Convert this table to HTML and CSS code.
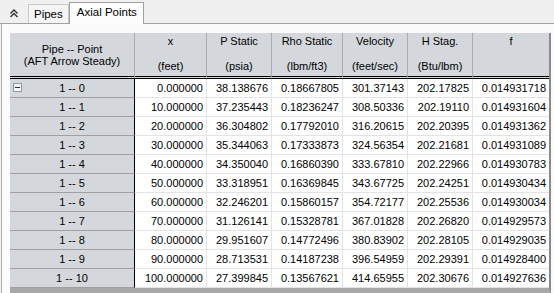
FILE: index.html
```html
<!DOCTYPE html>
<html lang="en">
<head>
    <meta charset="UTF-8">
    <title>Axial Points</title>
    <link rel="stylesheet" href="styles.css">
</head>
<body>
    <div class="tabstrip">
        <span class="collapse">
            <svg width="10" height="9" viewBox="0 0 10 9"><path d="M1.5 4.5 L5 1 L8.5 4.5 M1.5 8 L5 4.5 L8.5 8" fill="none" stroke="#333" stroke-width="1.4"/></svg>
        </span>
        <div class="tab">Pipes</div>
        <div class="tab active">Axial Points</div>
    </div>
    <div class="panel">
        <div class="grid">
            <table>
                <thead>
                    <tr>
                        <th class="c-pipe">Pipe -- Point<br>(AFT Arrow Steady)</th>
                        <th class="c-x"><div>x</div><div class="unit">(feet)</div></th>
                        <th class="c-p"><div>P Static</div><div class="unit">(psia)</div></th>
                        <th class="c-rho"><div>Rho Static</div><div class="unit">(lbm/ft3)</div></th>
                        <th class="c-v"><div>Velocity</div><div class="unit">(feet/sec)</div></th>
                        <th class="c-h"><div>H Stag.</div><div class="unit">(Btu/lbm)</div></th>
                        <th class="c-f"><div>f</div><div class="unit">&nbsp;</div></th>
                    </tr>
                </thead>
                <tbody>
                    <tr><td class="pt"><span class="minus"></span>1 -- 0</td><td>0.000000</td><td>38.138676</td><td>0.18667805</td><td>301.37143</td><td>202.17825</td><td>0.014931718</td></tr>
                    <tr><td class="pt">1 -- 1</td><td>10.000000</td><td>37.235443</td><td>0.18236247</td><td>308.50336</td><td>202.19110</td><td>0.014931604</td></tr>
                    <tr><td class="pt">1 -- 2</td><td>20.000000</td><td>36.304802</td><td>0.17792010</td><td>316.20615</td><td>202.20395</td><td>0.014931362</td></tr>
                    <tr><td class="pt">1 -- 3</td><td>30.000000</td><td>35.344063</td><td>0.17333873</td><td>324.56354</td><td>202.21681</td><td>0.014931089</td></tr>
                    <tr><td class="pt">1 -- 4</td><td>40.000000</td><td>34.350040</td><td>0.16860390</td><td>333.67810</td><td>202.22966</td><td>0.014930783</td></tr>
                    <tr><td class="pt">1 -- 5</td><td>50.000000</td><td>33.318951</td><td>0.16369845</td><td>343.67725</td><td>202.24251</td><td>0.014930434</td></tr>
                    <tr><td class="pt">1 -- 6</td><td>60.000000</td><td>32.246201</td><td>0.15860157</td><td>354.72177</td><td>202.25536</td><td>0.014930034</td></tr>
                    <tr><td class="pt">1 -- 7</td><td>70.000000</td><td>31.126141</td><td>0.15328781</td><td>367.01828</td><td>202.26820</td><td>0.014929573</td></tr>
                    <tr><td class="pt">1 -- 8</td><td>80.000000</td><td>29.951607</td><td>0.14772496</td><td>380.83902</td><td>202.28105</td><td>0.014929035</td></tr>
                    <tr><td class="pt">1 -- 9</td><td>90.000000</td><td>28.713531</td><td>0.14187238</td><td>396.54959</td><td>202.29391</td><td>0.014928400</td></tr>
                    <tr><td class="pt">1 -- 10</td><td>100.000000</td><td>27.399845</td><td>0.13567621</td><td>414.65955</td><td>202.30676</td><td>0.014927636</td></tr>
                </tbody>
            </table>
        </div>
    </div>
</body>
</html>
```

FILE: styles.css
```css
body {
    margin: 0;
    background: #f0f0f0;
    font-family: "Liberation Sans", Arial, sans-serif;
    font-size: 11px;
    color: #000;
    overflow: hidden;
}
.tabstrip {
    height: 23px;
    border-bottom: 1px solid #a0a0a0;
    display: flex;
    align-items: flex-end;
}
.collapse {
    width: 28px;
    height: 23px;
    display: flex;
    align-items: center;
    justify-content: center;
    padding-top: 4px;
    box-sizing: border-box;
}
.tab {
    height: 18px;
    padding: 0 5px;
    border: 1px solid #c8c8c8;
    border-bottom: none;
    background: #f5f5f5;
    font-size: 11.5px;
    line-height: 19px;
}
.tab.active {
    height: 21px;
    margin-bottom: -1px;
    background: #fcfcfc;
    border-color: #a0a0a0;
    padding: 0 6px 0 7px;
    line-height: 18px;
}
.panel {
    margin-left: 1px;
    border-left: 1px solid #b0b0b0;
    background: #fbfbfb;
    height: 269px;
    padding: 9px 0 0 8px;
}
.grid {
    display: inline-block;
    border-right: 2px solid #8a8a8a;
    border-bottom: 6px solid #a8a8a8;
    background: #fff;
}
table {
    border-collapse: separate;
    border-spacing: 0;
    table-layout: fixed;
}
th {
    background: #d4d8dc;
    font-weight: normal;
    height: 46px;
    padding: 2px 0 0 0;
    vertical-align: top;
    line-height: 12.5px;
    border-right: 1px solid #a9adb1;
    border-bottom: 3px double #000;
    box-sizing: border-box;
    text-align: center;
}
th .unit {
    margin-top: 12.5px;
}
th.c-pipe {
    vertical-align: middle;
    line-height: 12px;
    padding-top: 0;
}
th.c-f {
    border-right: none;
}
.c-pipe { width: 125px; }
.c-x { width: 72px; }
.c-p { width: 65px; }
.c-rho { width: 71px; }
.c-v { width: 65px; }
.c-h { width: 65px; }
.c-f { width: 76px; }
td {
    height: 19px;
    padding: 0 3px 0 0;
    line-height: 18px;
    text-align: right;
    border-right: 1px solid #e3e3e3;
    border-bottom: 1px solid #e3e3e3;
    box-sizing: border-box;
    white-space: nowrap;
}
td:last-child {
    border-right: none;
}
td.pt {
    background: #d4d8dc;
    text-align: center;
    padding: 0;
    border-right: 1px solid #000;
    border-bottom: 1px solid #a0a0a0;
    position: relative;
}
.minus {
    position: absolute;
    left: 3px;
    top: 4px;
    width: 7px;
    height: 7px;
    border: 1px solid #8e9aa8;
    background: #f4f6f8;
}
.minus::after {
    content: "";
    position: absolute;
    left: 1px;
    top: 3px;
    width: 5px;
    height: 1px;
    background: #1c2c5c;
}
```
